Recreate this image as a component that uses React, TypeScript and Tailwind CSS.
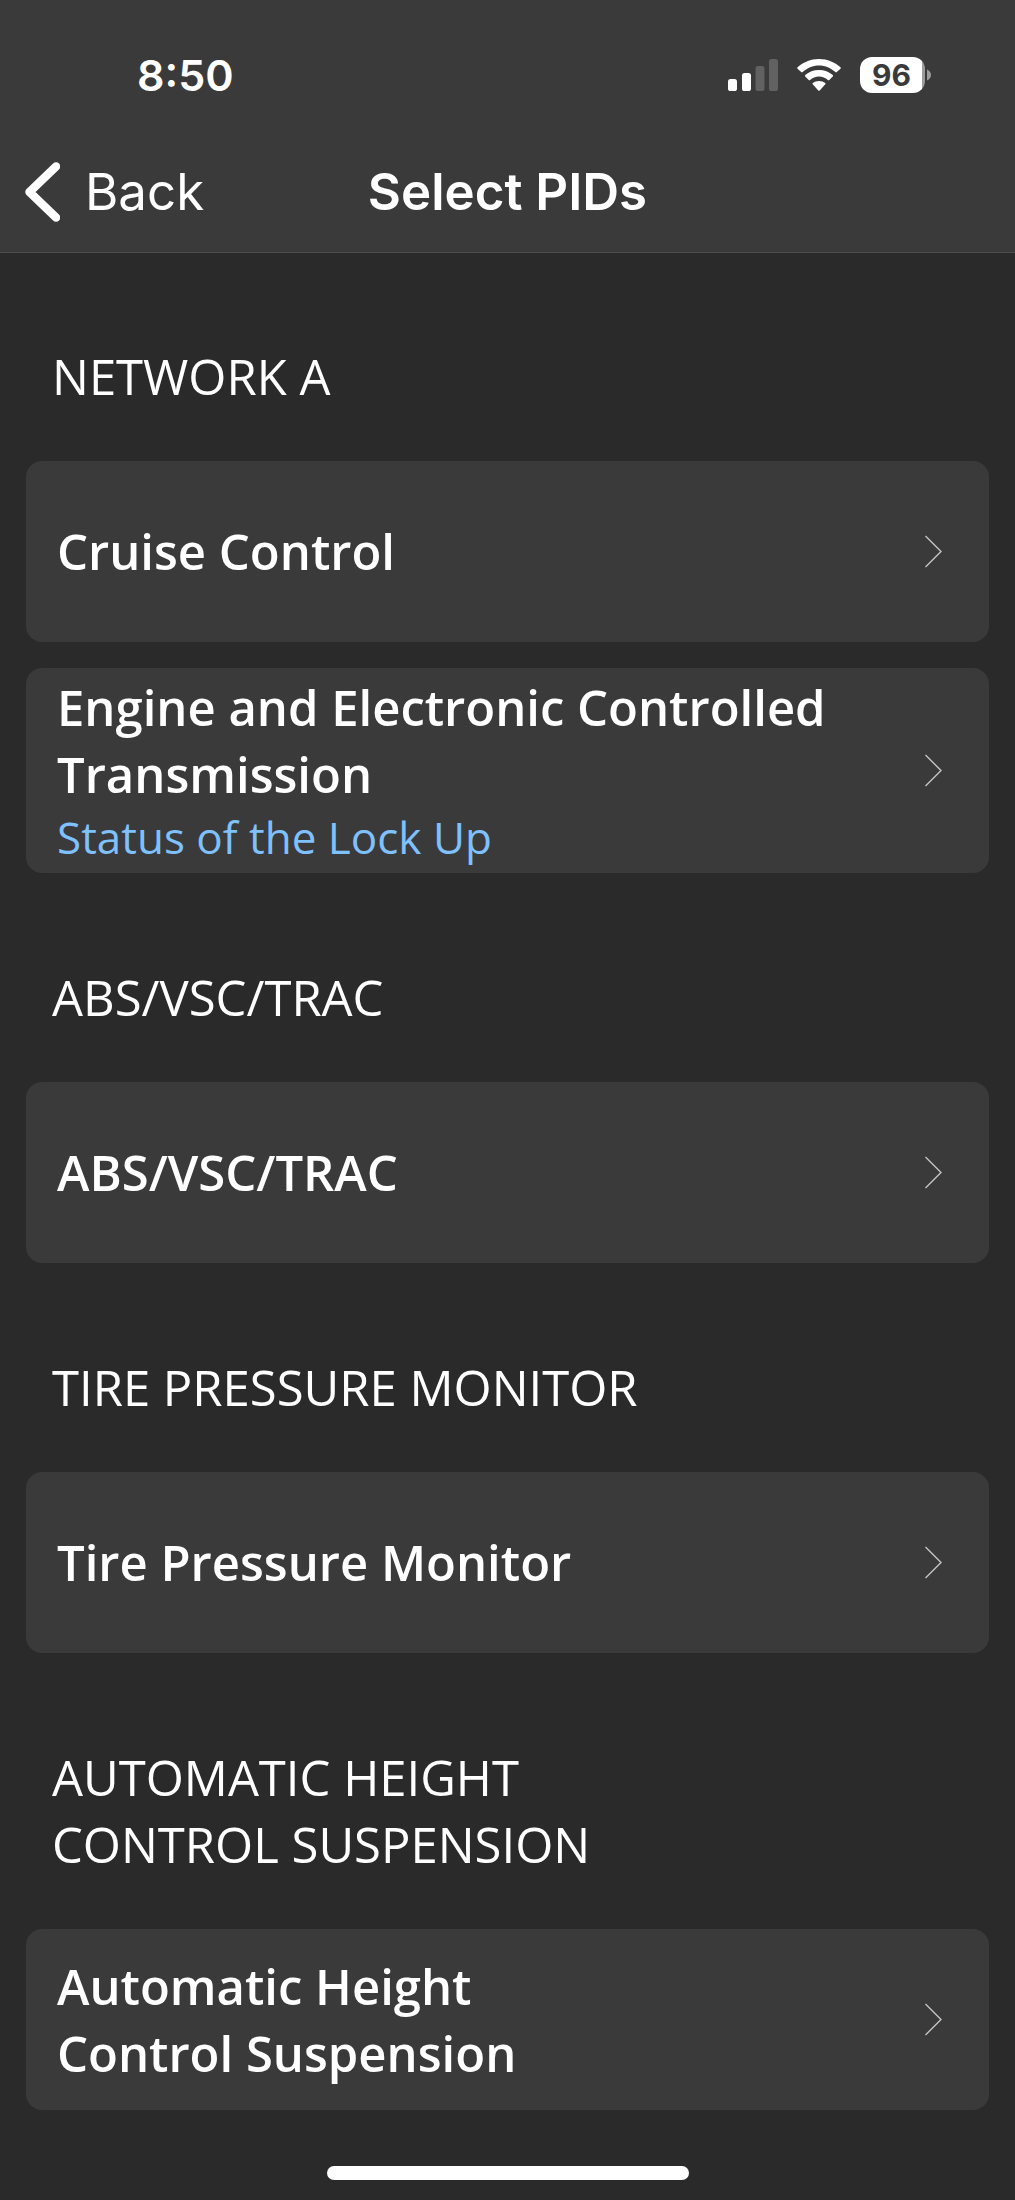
type Pid = {
  name: string;
  selected?: string;
};

type Network = {
  title: string;
  items: Pid[];
};

const networks: Network[] = [
  {
    title: "NETWORK A",
    items: [
      { name: "Cruise Control" },
      {
        name: "Engine and Electronic Controlled Transmission",
        selected: "Status of the Lock Up",
      },
    ],
  },
  { title: "ABS/VSC/TRAC", items: [{ name: "ABS/VSC/TRAC" }] },
  { title: "TIRE PRESSURE MONITOR", items: [{ name: "Tire Pressure Monitor" }] },
  {
    title: "AUTOMATIC HEIGHT\nCONTROL SUSPENSION",
    items: [{ name: "Automatic Height\nControl Suspension" }],
  },
];

function SignalIcon() {
  return (
    <svg width="50" height="32" viewBox="0 0 50 32" fill="#fff" aria-hidden="true">
      <rect x="0" y="20" width="9" height="12" rx="2.6" />
      <rect x="14" y="14" width="9" height="18" rx="2.6" />
      <rect x="27.5" y="7" width="9" height="25" rx="2.6" opacity="0.2" />
      <rect x="41" y="0" width="9" height="32" rx="2.6" opacity="0.2" />
    </svg>
  );
}

function WifiIcon() {
  return (
    <svg width="44" height="32" viewBox="0 0 44 32" fill="#fff" aria-hidden="true">
      <path d="M22 6.4c6.300 0 12 2.500 16.400 6.700.4.4 1 .4 1.400 0L43.500 9.700c.4-.4.4-1 0-1.400C37.800 3.100 30.300 0 22 0S6.200 3.100.5 8.300c-.4.4-.4 1 0 1.400L4.200 13.100c.4.4 1 .4 1.400 0C10 8.900 15.700 6.400 22 6.400z" />
      <path d="M22 17.400c3.400 0 6.500 1.400 8.900 3.600.4.4 1 .4 1.400 0l3.500-3.500c.4-.4.4-1 0-1.400C32.200 12.900 27.300 11 22 11S11.800 12.900 8.200 16.100c-.4.4-.4 1 0 1.400l3.500 3.500c.4.4 1 .4 1.400 0 2.400-2.200 5.500-3.600 8.900-3.600z" />
      <path d="M28.300 25.300c.4-.4.4-1 0-1.400-1.700-1.200-3.900-2-6.300-2s-4.600.8-6.300 2c-.4.4-.4 1 0 1.400l5.600 6.100c.4.4 1 .4 1.400 0z" />
    </svg>
  );
}

function Battery({ level }: { level: number }) {
  return (
    <div className="flex items-center gap-[2px]">
      <div className="flex h-9 w-[65px] items-center justify-center rounded-[12px] bg-[linear-gradient(to_right,#fff_96%,#9c9c9c_96%)] pr-[2px] text-[30px] leading-9 font-bold text-[#3a3a3a]">
        {level}
      </div>
      <svg width="4" height="12" viewBox="0 0 4 12" fill="#9c9c9c" aria-hidden="true">
        <path d="M0 0.500C2.500 1.500 4 3.500 4 6S2.500 10.500 0 11.500z" />
      </svg>
    </div>
  );
}

function PidCard({ name, selected }: Pid) {
  return (
    <button
      type="button"
      className="flex min-h-[181px] w-full items-center justify-between rounded-[16px] bg-[#3a3a3a] py-[6px] pr-[46px] pl-[31px] text-left"
    >
      <span className="flex flex-col">
        <span className="text-[49px] leading-[67px] font-semibold whitespace-pre-line text-white">
          {name}
        </span>
        {selected && (
          <span className="text-[44px] leading-[59px] text-[#7fc0ff]">{selected}</span>
        )}
      </span>
      <svg
        className="shrink-0"
        width="18"
        height="33"
        viewBox="0 0 18 33"
        fill="none"
        stroke="#c4c4c4"
        strokeWidth="1.400"
        aria-hidden="true"
      >
        <path d="M0.500 1L16 16.500L0.500 32" />
      </svg>
    </button>
  );
}

export default function App() {
  return (
    <div className="flex min-h-screen flex-col bg-[#2a2a2a] font-['Open_Sans',sans-serif] text-white">
      <header className="border-b border-[#4b4c4b] bg-[#3a3a3a] font-['Inter',sans-serif]">
        {/* Status bar */}
        <div className="flex h-[132px] items-center justify-between pt-[18px] pr-[84px] pl-[137px]">
          <span className="text-[43px] leading-[54px] font-semibold">8:50</span>
          <div className="flex items-center gap-[19px]">
            <SignalIcon />
            <WifiIcon />
            <Battery level={96} />
          </div>
        </div>

        {/* Navigation */}
        <nav className="grid h-[120px] grid-cols-[1fr_auto_1fr] items-center px-6">
          <a href="#" className="flex items-center gap-[25px] text-[51px] leading-[64px]">
            <svg
              width="36"
              height="60"
              viewBox="0 0 36 60"
              fill="none"
              stroke="#fff"
              strokeWidth="8.500"
              strokeLinecap="round"
              strokeLinejoin="round"
              aria-hidden="true"
            >
              <path d="M32 4.500L5.500 30L32 55.500" />
            </svg>
            Back
          </a>
          <h1 className="text-[51px] leading-[64px] font-semibold">Select PIDs</h1>
        </nav>
      </header>

      <main className="px-[26px]">
        {networks.map((network) => (
          <section key={network.title} className="pt-[91px] first:pt-[90px]">
            <h2 className="mb-[51px] px-[26px] text-[49px] leading-[67px] whitespace-pre-line">
              {network.title}
            </h2>
            <div className="flex flex-col gap-[26px]">
              {network.items.map((item) => (
                <PidCard key={item.name} {...item} />
              ))}
            </div>
          </section>
        ))}
      </main>

      {/* Home indicator */}
      <div className="mt-auto flex justify-center pt-10 pb-5">
        <div className="h-[14px] w-[362px] rounded-full bg-white" />
      </div>
    </div>
  );
}
